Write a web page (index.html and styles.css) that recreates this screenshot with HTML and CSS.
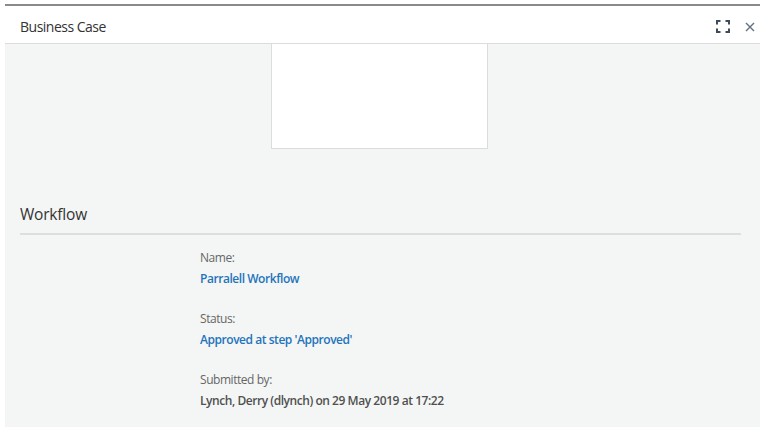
FILE: index.html
```html
<!DOCTYPE html>
<html lang="en">
  <head>
    <meta charset="UTF-8" />
    <title>Business Case</title>
    <link rel="stylesheet" href="styles.css">
  </head>
  <body>
    <div class="panel">
      <div class="panel-header">
        <div class="panel-title">Business Case</div>
        <div class="panel-tools">
          <svg class="tool-expand" width="14" height="13" viewBox="0 0 14 13">
            <path d="M1 4.5V1h3.5M9.5 1H13v3.5M13 8.5V12H9.5M4.5 12H1V8.5" fill="none" stroke="#3d4b5a" stroke-width="2"/>
          </svg>
          <svg class="tool-close" width="10" height="10" viewBox="0 0 10 10">
            <path d="M1 1l8 8M9 1l-8 8" fill="none" stroke="#5f7183" stroke-width="1.4"/>
          </svg>
        </div>
      </div>
      <div class="panel-body">
        <div class="preview-wrap">
          <div class="preview"></div>
        </div>
        <div class="section">
          <div class="section-title">Workflow</div>
          <dl class="fields">
            <dt>Name:</dt>
            <dd class="link">Parralell Workflow</dd>
            <dt>Status:</dt>
            <dd class="link">Approved at step 'Approved'</dd>
            <dt>Submitted by:</dt>
            <dd>Lynch, Derry (dlynch) on 29 May 2019 at 17:22</dd>
          </dl>
        </div>
      </div>
    </div>
  </body>
</html>
```

FILE: styles.css
```css
html,
body {
  margin: 0;
  padding: 0;
  background: #fff;
}

body {
  padding: 4px 5px 0 5px;
  font-family: "Open Sans", "Noto Sans", sans-serif;
}

.panel {
  border-top: 2px solid #8a8a8a;
}

.panel-header {
  display: flex;
  align-items: center;
  justify-content: space-between;
  height: 38px;
  padding: 3px 5px 0 15px;
  box-sizing: border-box;
  border-bottom: 1px solid #dcdcdc;
  background: #fff;
}

.panel-title {
  font-size: 14px;
  color: #333;
  letter-spacing: -0.5px;
}

.panel-tools {
  display: flex;
  align-items: center;
  gap: 15px;
}

.tool-expand {
  margin-top: 1px;
}

.tool-close {
  margin-top: 1px;
}

.panel-body {
  background: #f4f6f5;
  height: 383px;
  padding: 0 19px 0 15px;
}

.preview-wrap {
  display: flex;
  justify-content: center;
  padding-right: 2px;
}

.preview {
  width: 215px;
  height: 104px;
  background: #fff;
  border: 1px solid #dcdcdc;
  border-top: 0;
}

.section {
  padding-top: 54px;
}

.section-title {
  font-size: 15.5px;
  color: #333;
  padding-bottom: 8px;
  border-bottom: 2px solid #dedede;
  letter-spacing: -0.2px;
}

.fields {
  margin: 0;
  padding: 12px 0 0 180px;
  font-size: 12px;
  letter-spacing: -0.45px;
}

.fields dt {
  color: #666;
  line-height: 21px;
}

.fields dd {
  margin: 0 0 19px 0;
  line-height: 21px;
  font-weight: 600;
  color: #505050;
}

.fields dd.link {
  color: #1f74bb;
}
```
